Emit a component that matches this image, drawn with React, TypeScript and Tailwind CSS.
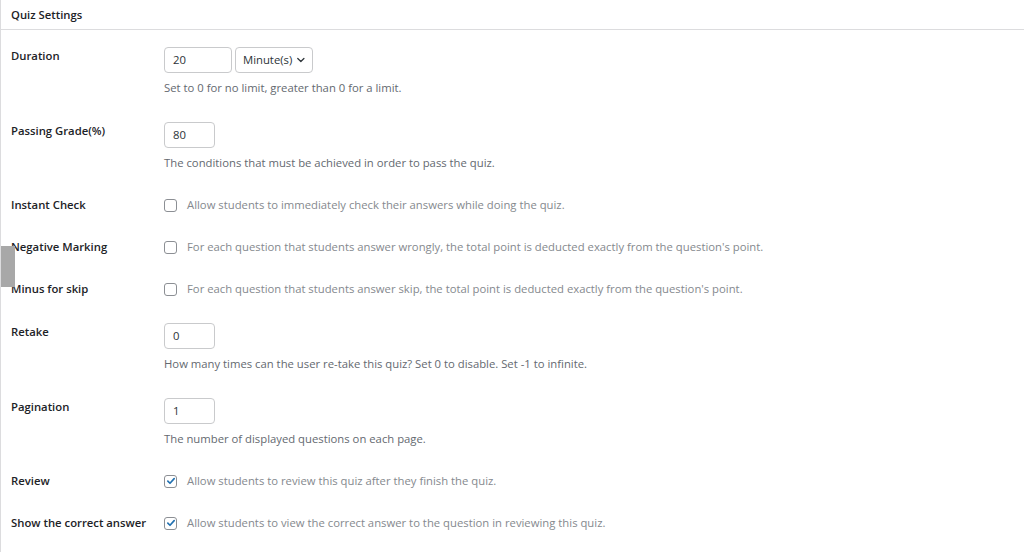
type Row =
  | { kind: "input"; label: string; value: string; width: string; help: string; select?: boolean }
  | { kind: "check"; label: string; text: string; checked?: boolean };

const rows: Row[] = [
  { kind: "input", label: "Duration", value: "20", width: "w-[68px]", help: "Set to 0 for no limit, greater than 0 for a limit.", select: true },
  { kind: "input", label: "Passing Grade(%)", value: "80", width: "w-[51px]", help: "The conditions that must be achieved in order to pass the quiz." },
  { kind: "check", label: "Instant Check", text: "Allow students to immediately check their answers while doing the quiz." },
  { kind: "check", label: "Negative Marking", text: "For each question that students answer wrongly, the total point is deducted exactly from the question's point." },
  { kind: "check", label: "Minus for skip", text: "For each question that students answer skip, the total point is deducted exactly from the question's point." },
  { kind: "input", label: "Retake", value: "0", width: "w-[51px]", help: "How many times can the user re-take this quiz? Set 0 to disable. Set -1 to infinite." },
  { kind: "input", label: "Pagination", value: "1", width: "w-[51px]", help: "The number of displayed questions on each page." },
  { kind: "check", label: "Review", text: "Allow students to review this quiz after they finish the quiz.", checked: true },
  { kind: "check", label: "Show the correct answer", text: "Allow students to view the correct answer to the question in reviewing this quiz.", checked: true },
];

const Checkbox = ({ checked }: { checked?: boolean }) => (
  <span className="flex h-[13px] w-[13px] shrink-0 items-center justify-center rounded-[3px] border border-[#8c8f94] bg-white">
    {checked && (
      <svg viewBox="0 0 12 12" className="h-[10px] w-[10px]">
        <path d="M2.2 6.2 L4.8 8.7 L9.8 3.2" fill="none" stroke="#2271b1" strokeWidth="2" strokeLinecap="round" strokeLinejoin="round" />
      </svg>
    )}
  </span>
);

const App = () => {
  return (
    <div className="relative h-[552px] w-[1024px] overflow-hidden border-l border-[#dcdcde] bg-white text-[11.3px] leading-[16px] text-[#1d2327] [font-family:'Open_Sans',sans-serif]">
      <div className="flex h-[30px] items-center border-b border-[#dcdcde] pl-[10px] font-semibold">
        Quiz Settings
      </div>

      <div className="pt-[4px]">
        {rows.map((row) => (
          <div key={row.label} className="flex py-[13px]">
            <div className={`w-[163px] shrink-0 pl-[10px] font-semibold ${row.kind === "input" ? "pt-[1px]" : ""}`}>
              {row.label}
            </div>
            {row.kind === "input" ? (
              <div className="flex flex-col gap-[7px]">
                <div className="flex gap-[3px]">
                  <div className={`flex h-[26px] items-center rounded-[4px] border border-[#c9cacc] px-[8px] text-[#2c3338] ${row.width}`}>
                    {row.value}
                  </div>
                  {row.select && (
                    <div className="flex h-[26px] w-[78px] items-center gap-[5px] rounded-[4px] border border-[#c9cacc] px-[7px] text-[#2c3338]">
                      Minute(s)
                      <svg viewBox="0 0 10 6" className="h-[6px] w-[9px]">
                        <path d="M1 1 L5 5 L9 1" fill="none" stroke="#2c3338" strokeWidth="1.6" strokeLinecap="round" strokeLinejoin="round" />
                      </svg>
                    </div>
                  )}
                </div>
                <div className="text-[#646970]">{row.help}</div>
              </div>
            ) : (
              <div className="flex items-center gap-[10px] text-[#85898e]">
                <Checkbox checked={row.checked} />
                <span>{row.text}</span>
              </div>
            )}
          </div>
        ))}
      </div>

      <div className="absolute left-0 top-[246px] h-[41px] w-[14px] bg-[#a8a8a8]" />
    </div>
  );
};

export default App;
